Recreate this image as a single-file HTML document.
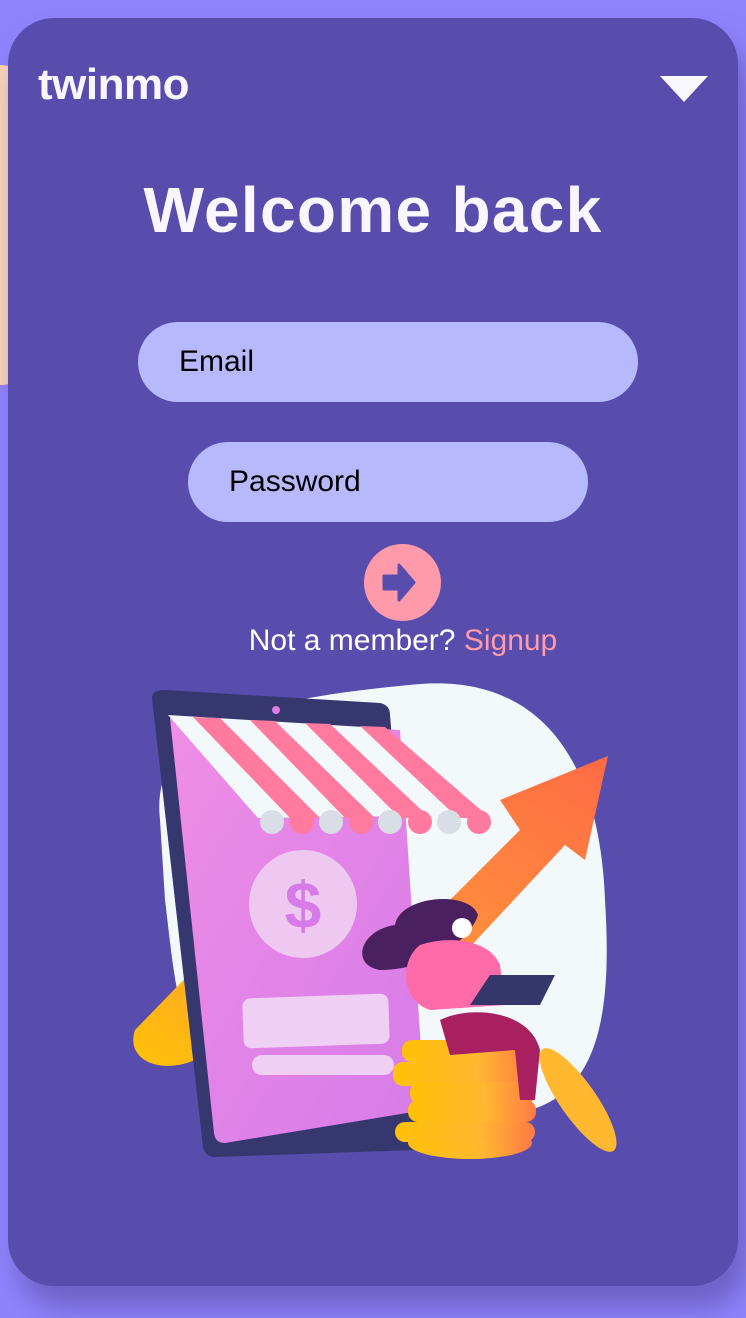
<!DOCTYPE html>
<html><head><meta charset="utf-8"><style>
html,body{margin:0;padding:0}
body{width:746px;height:1318px;background:#9183fe;position:relative;overflow:hidden;font-family:"Liberation Sans",sans-serif}
.peach{position:absolute;left:-40px;top:65px;width:80px;height:320px;background:#fdd5b5;border-radius:40px}
.card{position:absolute;left:8px;top:18px;width:730px;height:1268px;background:#584cad;border-radius:46px;box-shadow:10px 22px 28px rgba(80,70,150,.55)}
.logo{position:absolute;left:30px;top:42px;font-size:44px;font-weight:bold;color:#f8f6ff;letter-spacing:-0.5px}
.tri{position:absolute;left:652px;top:58px;width:0;height:0;border-left:24px solid transparent;border-right:24px solid transparent;border-top:26px solid #f8f6ff}
h1{position:absolute;left:0;width:730px;top:155px;margin:0;text-align:center;font-size:64px;font-weight:900;color:#f8f6ff;letter-spacing:1.3px}
.inp{position:absolute;background:#b8b8fc;border-radius:40px;height:80px;font-size:30px;color:#000;line-height:80px;box-sizing:border-box;padding-left:41px}
.btn{position:absolute;left:356px;top:526px;width:77px;height:77px;border-radius:50%;background:#fe9aaa}
.nm{position:absolute;left:30px;width:730px;top:606px;text-align:center;font-size:30px;color:#fff}
.nm span{color:#fe9aaa}
</style></head><body>
<div class="peach"></div>
<div class="card">
<div class="logo">twinmo</div>
<div class="tri"></div>
<h1>Welcome back</h1>
<div class="inp" style="left:130px;top:304px;width:500px">Email</div>
<div class="inp" style="left:180px;top:424px;width:400px">Password</div>
<div class="btn"><svg width="77" height="77" viewBox="0 0 77 77"><path d="M20 32 H35 V21 L50 38.5 L35 56 V45 H20 Z" fill="#584cad" stroke="#584cad" stroke-width="3" stroke-linejoin="round"/></svg></div>
<div class="nm">Not a member? <span>Signup</span></div>
<svg style="position:absolute;left:0;top:0" width="730" height="1268" viewBox="8 18 730 1268">
<defs>
<linearGradient id="ar" x1="0" y1="1" x2="1" y2="0"><stop offset="0" stop-color="#ffc107"/><stop offset=".4" stop-color="#ff9a3a"/><stop offset="1" stop-color="#ff6a45"/></linearGradient>
<linearGradient id="sc" x1="0" y1="0" x2="1" y2="1"><stop offset="0" stop-color="#ef8ee6"/><stop offset="1" stop-color="#d67be8"/></linearGradient>
<linearGradient id="co" x1="0" y1="0" x2="1" y2="0"><stop offset="0" stop-color="#ffc107"/><stop offset=".6" stop-color="#ffb830"/><stop offset="1" stop-color="#ff7a45"/></linearGradient>
</defs>
<path d="M160 820 C150 730 240 700 420 684 C540 675 600 760 605 900 C612 1010 600 1090 530 1110 L250 1110 C180 1080 175 980 165 900 Z" fill="#f3f8fb"/>
<path d="M135 1030 L300 860 L420 930 L520 830 L500 800 L608 756 L585 860 L565 845 L430 990 L330 920 L195 1060 C160 1075 125 1060 135 1030 Z" fill="url(#ar)"/>
<path d="M152 698 Q152 690 165 690 L380 703 Q390 705 390 715 L425 1140 Q425 1150 415 1150 L215 1157 Q205 1157 203 1147 Z" fill="#36376e"/>
<path d="M170 718 L400 730 L425 1110 L225 1143 Q215 1143 214 1133 Z" fill="url(#sc)"/>
<circle cx="276" cy="710" r="4" fill="#e07ce8"/>
<path d="M168 715 L380 728 L494 815 L258 818 Z" fill="#f3f8fb"/>
<path d="M193 717 L220 718 L320 818 L290 818 Z M250 720 L275 721 L375 818 L345 818 Z M305 723 L330 724 L430 818 L400 818 Z M360 726 L385 727 L490 818 L458 818 Z" fill="#ff7a9e"/>
<g fill="#d8dde6"><circle cx="272" cy="822" r="12"/><circle cx="331" cy="822" r="12"/><circle cx="390" cy="822" r="12"/><circle cx="449" cy="822" r="12"/></g>
<g fill="#ff7a9e"><circle cx="302" cy="822" r="12"/><circle cx="361" cy="822" r="12"/><circle cx="420" cy="822" r="12"/><circle cx="479" cy="822" r="12"/></g>
<circle cx="303" cy="904" r="54" fill="#efc8f2"/>
<text x="303" y="928" text-anchor="middle" font-size="66" font-weight="bold" fill="#d67be8" font-family="Liberation Sans">$</text>
<rect x="243" y="996" width="146" height="50" rx="8" fill="#efcff3" transform="rotate(-2 316 1021)"/>
<rect x="252" y="1055" width="142" height="20" rx="10" fill="#efcff3"/>
<g fill="url(#co)"><ellipse cx="470" cy="1143" rx="62" ry="16"/><rect x="395" y="1122" width="140" height="20" rx="10"/><rect x="408" y="1100" width="128" height="22" rx="10"/><rect x="393" y="1062" width="140" height="24" rx="10"/><rect x="402" y="1040" width="128" height="22" rx="10"/><rect x="410" y="1082" width="125" height="22" rx="10"/></g>
<ellipse cx="578" cy="1100" rx="18" ry="62" transform="rotate(-35 578 1100)" fill="#ffb830"/>
<path d="M395 925 C400 895 470 890 478 915 C470 940 430 970 380 970 C350 965 360 930 395 925Z" fill="#4a2060"/>
<circle cx="462" cy="928" r="10" fill="#fff"/>
<path d="M420 945 C450 935 490 940 500 965 L505 1005 L430 1010 C400 1000 400 960 420 945Z" fill="#ff6aa9"/>
<path d="M440 1020 C470 1005 530 1010 540 1050 L535 1100 L520 1100 L515 1050 L450 1055 Z" fill="#a82060"/>
<path d="M490 975 L555 975 L540 1005 L470 1005 Z" fill="#35366a"/>
</svg>
</div>
</body></html>
